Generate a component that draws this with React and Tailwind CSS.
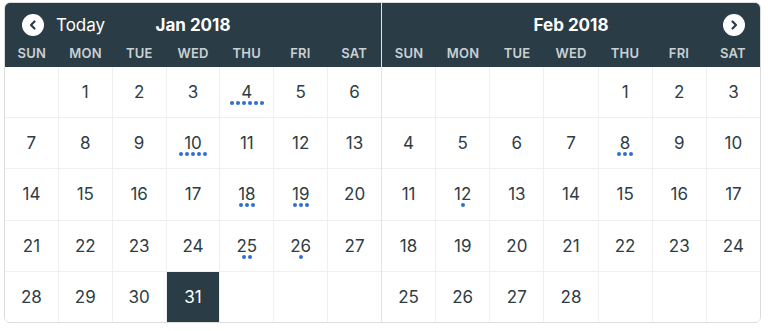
import React from "react";

const WEEK = ["SUN", "MON", "TUE", "WED", "THU", "FRI", "SAT"];

function buildCells(offset, days) {
  const cells = [];
  for (let i = 0; i < offset; i++) cells.push(null);
  for (let d = 1; d <= days; d++) cells.push(d);
  while (cells.length < 35) cells.push(null);
  return cells;
}

function Arrow({ dir }) {
  return (
    <div className="w-[22px] h-[22px] rounded-full bg-white flex items-center justify-center">
      <svg width="12" height="12" viewBox="0 0 12 12">
        {dir === "left" ? (
          <path d="M7.5 2.5 L4 6 L7.5 9.5" fill="none" stroke="#2a3c46" strokeWidth="2.2" strokeLinecap="round" strokeLinejoin="round" />
        ) : (
          <path d="M4.5 2.5 L8 6 L4.5 9.5" fill="none" stroke="#2a3c46" strokeWidth="2.2" strokeLinecap="round" strokeLinejoin="round" />
        )}
      </svg>
    </div>
  );
}

function Month({ title, offset, days, dots, selected, left, right, className }) {
  const cells = buildCells(offset, days);
  return (
    <div className={"flex flex-col " + className}>
      <div className="bg-[#2a3c46]">
        <div className="h-[37px] relative flex justify-center pt-[11px]">
          {left && (
            <div className="absolute left-[17px] top-[11px] flex items-center gap-[12px]">
              <Arrow dir="left" />
              <span className="text-[17px] text-white leading-[22px]">Today</span>
            </div>
          )}
          {right && (
            <div className="absolute right-[15px] top-[11px]">
              <Arrow dir="right" />
            </div>
          )}
          <span className="text-[17px] font-bold text-white leading-[22px]">{title}</span>
        </div>
        <div className="h-[27px] grid grid-cols-7 items-center">
          {WEEK.map((w) => (
            <div key={w} className="text-center text-[13px] font-semibold text-[#c9d1d5] tracking-[0.2px]">
              {w}
            </div>
          ))}
        </div>
      </div>
      <div className="grid grid-cols-7 grid-rows-5 gap-px bg-[#efefef] flex-1">
        {cells.map((d, i) => {
          const isSel = d !== null && d === selected;
          const n = d ? dots[d] || 0 : 0;
          return (
            <div
              key={i}
              className={
                "flex flex-col items-center pt-[15px] " + (isSel ? "bg-[#2a3c46]" : "bg-white")
              }
            >
              {d && (
                <span className={"text-[17px] leading-[20px] " + (isSel ? "text-white" : "text-[#2e3d45]")}>
                  {d}
                </span>
              )}
              {n > 0 && (
                <div className="flex gap-[2px] mt-[-1px]">
                  {Array.from({ length: n }).map((_, k) => (
                    <span key={k} className="w-[4px] h-[4px] rounded-full bg-[#2f6fd3]" />
                  ))}
                </div>
              )}
            </div>
          );
        })}
      </div>
    </div>
  );
}

export default function App() {
  return (
    <div className="w-[768px] h-[331px] bg-white pl-[4px] pt-[2px]" style={{ fontFamily: "Inter, 'Open Sans', sans-serif" }}>
      <div className="w-[757px] h-[321px] rounded-[6px] border border-[#dcdcdc] overflow-hidden flex">
        <Month
          title="Jan 2018"
          offset={1}
          days={31}
          dots={{ 4: 6, 10: 5, 18: 3, 19: 3, 25: 2, 26: 1 }}
          selected={31}
          left
          className="w-[377px] border-r border-[#e3e3e3]"
        />
        <Month
          title="Feb 2018"
          offset={4}
          days={28}
          dots={{ 8: 3, 12: 1 }}
          selected={null}
          right
          className="flex-1"
        />
      </div>
    </div>
  );
}
